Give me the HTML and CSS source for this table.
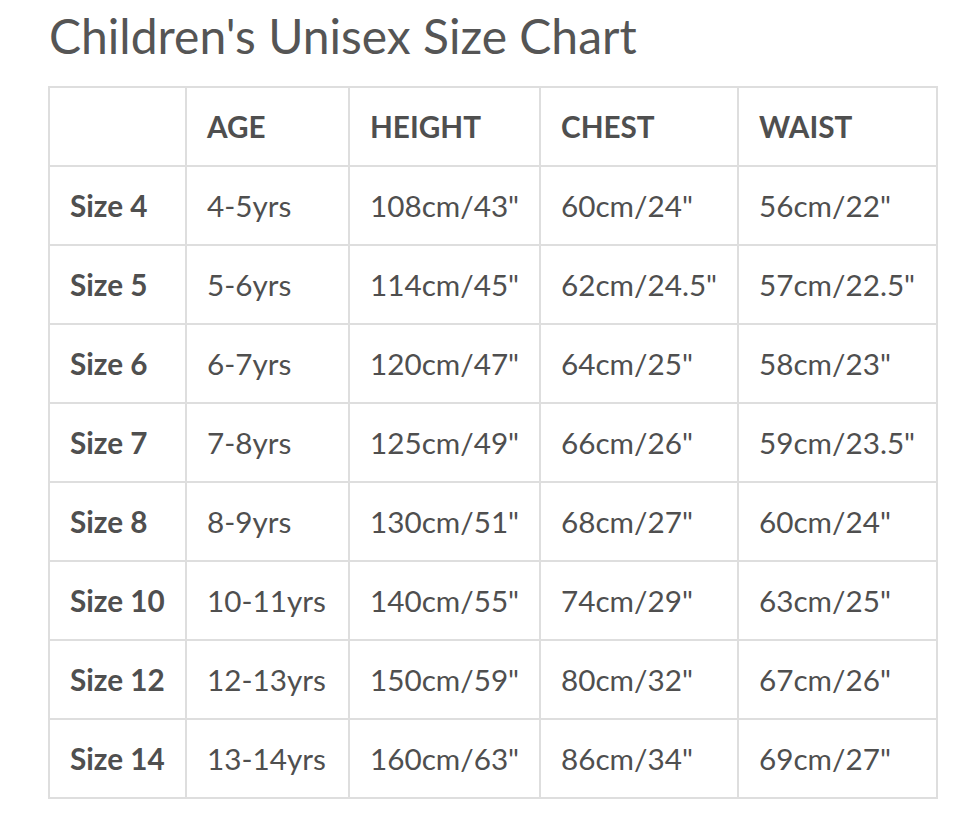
FILE: index.html
```html
<!DOCTYPE html>
<html>
<head>
<meta charset="utf-8">
<link rel="stylesheet" href="styles.css">
</head>
<body>
<div class="page">
  <h1 class="title">Children's Unisex Size Chart</h1>
  <table class="chart">
    <colgroup>
      <col class="c1"><col class="c2"><col class="c3"><col class="c4"><col class="c5">
    </colgroup>
    <thead>
      <tr><th></th><th>AGE</th><th>HEIGHT</th><th>CHEST</th><th>WAIST</th></tr>
    </thead>
    <tbody>
      <tr><th>Size 4</th><td>4-5yrs</td><td>108cm/43"</td><td>60cm/24"</td><td>56cm/22"</td></tr>
      <tr><th>Size 5</th><td>5-6yrs</td><td>114cm/45"</td><td>62cm/24.5"</td><td>57cm/22.5"</td></tr>
      <tr><th>Size 6</th><td>6-7yrs</td><td>120cm/47"</td><td>64cm/25"</td><td>58cm/23"</td></tr>
      <tr><th>Size 7</th><td>7-8yrs</td><td>125cm/49"</td><td>66cm/26"</td><td>59cm/23.5"</td></tr>
      <tr><th>Size 8</th><td>8-9yrs</td><td>130cm/51"</td><td>68cm/27"</td><td>60cm/24"</td></tr>
      <tr><th>Size 10</th><td>10-11yrs</td><td>140cm/55"</td><td>74cm/29"</td><td>63cm/25"</td></tr>
      <tr><th>Size 12</th><td>12-13yrs</td><td>150cm/59"</td><td>80cm/32"</td><td>67cm/26"</td></tr>
      <tr><th>Size 14</th><td>13-14yrs</td><td>160cm/63"</td><td>86cm/34"</td><td>69cm/27"</td></tr>
    </tbody>
  </table>
</div>
</body>
</html>
```
FILE: styles.css
```css
html, body {
  margin: 0;
  padding: 0;
  background: #fff;
}
.page {
  padding: 0 0 0 48px;
  font-family: Lato, "Liberation Sans", sans-serif;
  color: #4f4f4f;
}
.title {
  margin: 0;
  padding: 6px 0 0 1px;
  height: 80px;
  font-size: 48px;
  font-weight: 400;
  line-height: 60px;
  color: #555;
}
.chart {
  border-collapse: collapse;
  width: 888px;
  table-layout: fixed;
  margin-top: 0;
}
.c1 { width: 137px; }
.c2 { width: 163px; }
.c3 { width: 191px; }
.c4 { width: 198px; }
.c5 { width: 199px; }
.chart th, .chart td {
  border: 2px solid #dedede;
  height: 77px;
  padding: 0 0 0 20px;
  text-align: left;
  font-size: 29.7px;
  vertical-align: middle;
  white-space: nowrap;
}
.chart th {
  font-weight: 700;
  color: #4f4f4f;
}
.chart td {
  font-weight: 400;
  color: #4f4f4f;
}
```
